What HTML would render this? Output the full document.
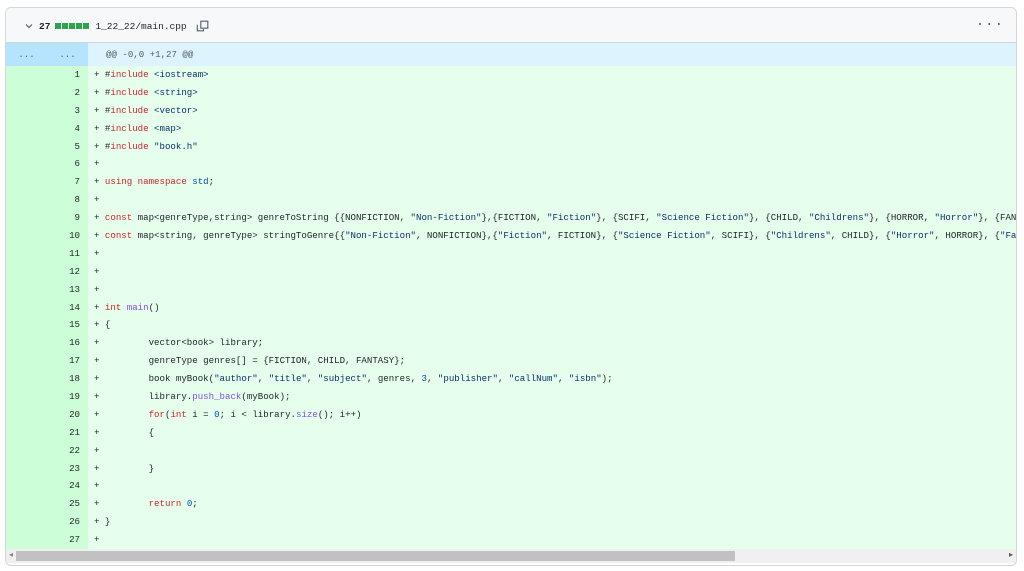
<!DOCTYPE html><html><head><style>
body{margin:0;background:#fff;width:1024px;height:571px;overflow:hidden;font-family:"Liberation Sans",sans-serif}
.box{position:absolute;left:5px;top:7px;width:1010px;height:557px;border:1px solid #d0d7de;border-radius:6px;overflow:hidden;background:#fff}
.hdr{height:34px;background:#f6f8fa;border-bottom:1px solid #d0d7de;position:relative;font-family:"Liberation Mono",monospace;font-size:9.5px;color:#1f2328}
.hdr .t{position:absolute;left:18px;top:11px;display:flex;align-items:center;gap:5px}
.sq{display:inline-block;width:6px;height:6px;background:#2da44e;margin-right:1px}
.row{height:17.9px;display:flex;font-family:"Liberation Mono",monospace;font-size:9.1px;line-height:17.9px;white-space:pre;tab-size:8;color:#1f2328;overflow:hidden}
.n{flex:none;width:41px;text-align:right;padding-right:8px;box-sizing:border-box;color:#1f2328}
.g{background:#ccffd8}.c{background:#e6ffec;flex:1 1 0;min-width:0;overflow:hidden;padding-left:6px}
.i{display:inline-block}
.h .g{background:#b6e3ff;color:#57606a}.h .c{background:#ddf4ff;color:#57606a}
.k{color:#cf222e}.s{color:#0a3069}.f{color:#8250df}.m{color:#0550ae}
.sb{position:absolute;left:0;top:541px;width:1010px;height:14px;background:#f0f0f0}
.th{position:absolute;left:10px;top:2px;width:719px;height:10px;background:#c1c1c1}
</style></head><body><div class="box">
<div class="hdr"><div class="t"><svg width="10" height="10" viewBox="0 0 10 10"><path d="M2 3.5l3 3 3-3" stroke="#57606a" stroke-width="1.2" fill="none"/></svg><b style="font-weight:600">27</b><span><i class="sq"></i><i class="sq"></i><i class="sq"></i><i class="sq"></i><i class="sq"></i></span><span>1_22_22/main.cpp</span><svg width="14" height="14" viewBox="0 0 16 16" style="margin-left:4px"><path d="M1.5 6.5v7h7v-2M5.5 2.5h8v8h-8z" stroke="#57606a" stroke-width="1.3" fill="none"/></svg></div><div style="position:absolute;right:12px;top:9px;color:#57606a;font-size:14px;letter-spacing:1px">···</div></div>
<div class="row h" style="height:23px;line-height:23px"><div class="n g" style="text-align:center;padding:0">...</div><div class="n g" style="text-align:center;padding:0">...</div><div class="c" style="padding-left:18px">@@ -0,0 +1,27 @@</div></div>
<div class="row"><div class="n g"></div><div class="n g">1</div><div class="c">+ #<span class="k">include</span> <span class="s">&lt;iostream&gt;</span></div></div>
<div class="row"><div class="n g"></div><div class="n g">2</div><div class="c">+ #<span class="k">include</span> <span class="s">&lt;string&gt;</span></div></div>
<div class="row"><div class="n g"></div><div class="n g">3</div><div class="c">+ #<span class="k">include</span> <span class="s">&lt;vector&gt;</span></div></div>
<div class="row"><div class="n g"></div><div class="n g">4</div><div class="c">+ #<span class="k">include</span> <span class="s">&lt;map&gt;</span></div></div>
<div class="row"><div class="n g"></div><div class="n g">5</div><div class="c">+ #<span class="k">include</span> <span class="s">"book.h"</span></div></div>
<div class="row"><div class="n g"></div><div class="n g">6</div><div class="c">+</div></div>
<div class="row"><div class="n g"></div><div class="n g">7</div><div class="c">+ <span class="k">using namespace</span> <span class="m">std</span>;</div></div>
<div class="row"><div class="n g"></div><div class="n g">8</div><div class="c">+</div></div>
<div class="row"><div class="n g"></div><div class="n g">9</div><div class="c">+ <span class="k">const</span> map&lt;genreType,string&gt; genreToString {{NONFICTION, <span class="s">"Non-Fiction"</span>},{FICTION, <span class="s">"Fiction"</span>}, {SCIFI, <span class="s">"Science Fiction"</span>}, {CHILD, <span class="s">"Childrens"</span>}, {HORROR, <span class="s">"Horror"</span>}, {FANTASY}}</div></div>
<div class="row"><div class="n g"></div><div class="n g">10</div><div class="c">+ <span class="k">const</span> map&lt;string, genreType&gt; stringToGenre{{<span class="s">"Non-Fiction"</span>, NONFICTION},{<span class="s">"Fiction"</span>, FICTION}, {<span class="s">"Science Fiction"</span>, SCIFI}, {<span class="s">"Childrens"</span>, CHILD}, {<span class="s">"Horror"</span>, HORROR}, {<span class="s">"Fantasy"</span>}}</div></div>
<div class="row"><div class="n g"></div><div class="n g">11</div><div class="c">+</div></div>
<div class="row"><div class="n g"></div><div class="n g">12</div><div class="c">+</div></div>
<div class="row"><div class="n g"></div><div class="n g">13</div><div class="c">+</div></div>
<div class="row"><div class="n g"></div><div class="n g">14</div><div class="c">+ <span class="k">int</span> <span class="f">main</span>()</div></div>
<div class="row"><div class="n g"></div><div class="n g">15</div><div class="c">+ {</div></div>
<div class="row"><div class="n g"></div><div class="n g">16</div><div class="c">+ <span class="i">	vector&lt;book&gt; library;</span></div></div>
<div class="row"><div class="n g"></div><div class="n g">17</div><div class="c">+ <span class="i">	genreType genres[] = {FICTION, CHILD, FANTASY};</span></div></div>
<div class="row"><div class="n g"></div><div class="n g">18</div><div class="c">+ <span class="i">	book myBook(<span class="s">"author"</span>, <span class="s">"title"</span>, <span class="s">"subject"</span>, genres, <span class="m">3</span>, <span class="s">"publisher"</span>, <span class="s">"callNum"</span>, <span class="s">"isbn"</span>);</span></div></div>
<div class="row"><div class="n g"></div><div class="n g">19</div><div class="c">+ <span class="i">	library.<span class="f">push_back</span>(myBook);</span></div></div>
<div class="row"><div class="n g"></div><div class="n g">20</div><div class="c">+ <span class="i">	<span class="k">for</span>(<span class="k">int</span> i = <span class="m">0</span>; i &lt; library.<span class="f">size</span>(); i++)</span></div></div>
<div class="row"><div class="n g"></div><div class="n g">21</div><div class="c">+ <span class="i">	{</span></div></div>
<div class="row"><div class="n g"></div><div class="n g">22</div><div class="c">+</div></div>
<div class="row"><div class="n g"></div><div class="n g">23</div><div class="c">+ <span class="i">	}</span></div></div>
<div class="row"><div class="n g"></div><div class="n g">24</div><div class="c">+</div></div>
<div class="row"><div class="n g"></div><div class="n g">25</div><div class="c">+ <span class="i">	<span class="k">return</span> <span class="m">0</span>;</span></div></div>
<div class="row"><div class="n g"></div><div class="n g">26</div><div class="c">+ }</div></div>
<div class="row"><div class="n g"></div><div class="n g">27</div><div class="c">+</div></div>
<div class="sb"><div class="th"></div><span style="position:absolute;left:3px;top:1px;font-size:8px;color:#888">◂</span><span style="position:absolute;right:3px;top:1px;font-size:8px;color:#555">▸</span></div>
</div></body></html>
